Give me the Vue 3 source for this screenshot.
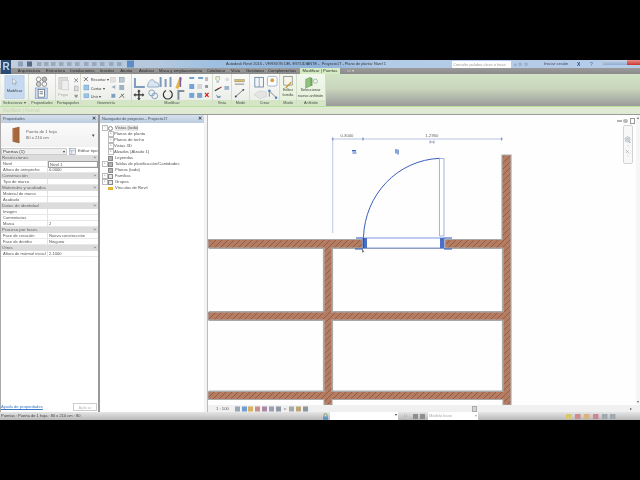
<script setup>
const tabs = [
  { name: 'Arquitectura', w: 28 }, { name: 'Estructura', w: 25 }, { name: 'Instalaciones', w: 29 },
  { name: 'Insertar', w: 20 }, { name: 'Anotar', w: 19 }, { name: 'Analizar', w: 21 },
  { name: 'Masa y emplazamiento', w: 47 }, { name: 'Colaborar', w: 24 }, { name: 'Vista', w: 15 },
  { name: 'Gestionar', w: 24 }, { name: 'Complementos', w: 30 }
]

const panels = [
  { id: 'sel', label: 'Seleccionar ▾', x: 1, w: 28 },
  { id: 'prop', label: 'Propiedades', x: 29, w: 27 },
  { id: 'clip', label: 'Portapapeles', x: 56, w: 25 },
  { id: 'geo', label: 'Geometría', x: 81, w: 51 },
  { id: 'mod', label: 'Modificar', x: 132, w: 81 },
  { id: 'vista', label: 'Vista', x: 213, w: 19 },
  { id: 'medir', label: 'Medir', x: 232, w: 18 },
  { id: 'crear', label: 'Crear', x: 250, w: 30 },
  { id: 'modo', label: 'Modo', x: 280, w: 17, green: true },
  { id: 'anf', label: 'Anfitrión', x: 297, w: 29, green: true }
]

const groups = [
  { title: 'Restricciones', rows: [['Nivel', 'Nivel 1'], ['Altura de antepecho', '0.0000']] },
  { title: 'Construcción', rows: [['Tipo de marco', '']] },
  { title: 'Materiales y acabados', rows: [['Material de marco', ''], ['Acabado', '']] },
  { title: 'Datos de identidad', rows: [['Imagen', ''], ['Comentarios', ''], ['Marca', '2']] },
  { title: 'Proceso por fases', rows: [['Fase de creación', 'Nueva construcción'], ['Fase de derribo', 'Ninguno']] },
  { title: 'Otros', rows: [['Altura de mármol inicial', '2.1000']] }
]

const tree = [
  { text: 'Vistas (todo)', box: true, icon: 'views', sel: true },
  { text: 'Planos de planta', sub: true },
  { text: 'Planos de techo', sub: true },
  { text: 'Vistas 3D', sub: true },
  { text: 'Alzados (Alzado 1)', sub: true },
  { text: 'Leyendas', icon: 'sheet' },
  { text: 'Tablas de planificación/Cantidades', box: true, icon: 'sheet' },
  { text: 'Planos (todo)', icon: 'sheet' },
  { text: 'Familias', box: true, icon: 'fam' },
  { text: 'Grupos', box: true, icon: 'fam' },
  { text: 'Vínculos de Revit', icon: 'link' }
]

const quick = [50, 57, 64, 72, 80, 88, 97, 105, 113, 122, 130]
const viewIcons = [
  ['#9aa6b5', 1], ['#6d9fd0', 8], ['#d8b060', 14], ['#c98d8d', 21], ['#a98aa6', 28],
  ['#9a9eb0', 35], ['#8e98a4', 42], ['#a8a8a8', 55], ['#bda676', 62], ['#8c949e', 69]
]
const statusIcons = [
  ['#d9c86a', 566], ['#cf8f88', 575], ['#dcb27c', 584], ['#cc8794', 593], ['#a0a8b0', 602], ['#a0a8b0', 610]
]
</script>

<template>
  <div class="screen">
    <div class="band"></div>
    <div class="app">
      <header class="titlebar">
        <div class="logo">R</div>
        <svg class="quick" viewBox="0 0 140 8">
          <rect x="16" y="1.5" width="5" height="5" fill="#8ea2b8" />
          <rect x="25" y="1.5" width="5" height="5" fill="#546a86" />
          <rect v-for="q in quick" :key="q" :x="q - 15" y="2" width="4.5" height="4" fill="#8a9ab0" opacity=".7" />
          <rect x="125" y=".5" width="7" height="7" fill="#5f8cc6" />
        </svg>
        <span class="title">Autodesk Revit 2016 - VERSIÓN DEL ESTUDIANTE -&nbsp;&nbsp;Proyecto17 - Plano de planta: Nivel 1</span>
        <span class="search">Consulte palabra clave o frase</span>
        <span class="title-tools">⌕ ☆ ☆</span>
        <span class="login">Iniciar sesión</span>
        <span class="dot-x">X</span>
        <span class="help">?</span>
        <div class="winbtns">
          <span class="wb"></span><span class="wb"></span><span class="wb close"></span>
        </div>
      </header>

      <nav class="tabs">
        <span v-for="t in tabs" :key="t.name" class="tab" :style="{ width: t.w + 'px' }">{{ t.name }}</span>
        <span class="tab active">Modificar | Puertas</span>
        <span class="tab-more">▭ ▾</span>
      </nav>

      <section class="ribbon">
        <div v-for="p in panels" :key="p.id" class="panel" :class="{ green: p.green }" :style="{ width: p.w + 'px' }">
          <svg class="panel-body" :viewBox="`${p.x} 74 ${p.w} 26`">
            <template v-if="p.id === 'sel'">
              <rect x="5" y="75" width="20" height="24" fill="#c5daf0" stroke="#a9c4e0" stroke-width=".5" />
              <path d="M13 78l0 6 1.5-1.3 1 2.3 1-.5-1-2.2 2 0z" fill="#eef4fa" stroke="#7b8a9a" stroke-width=".5" />
              <text x="15" y="92" class="rt" text-anchor="middle">Modificar</text>
            </template>
            <template v-if="p.id === 'prop'">
              <circle cx="39" cy="79" r="2.4" fill="none" stroke="#777" stroke-width=".8" />
              <circle cx="45" cy="79" r="2.4" fill="#bbb" stroke="#777" stroke-width=".8" />
              <circle cx="39" cy="84" r="2.4" fill="#ccc" stroke="#777" stroke-width=".8" />
              <circle cx="45" cy="84" r="2.4" fill="none" stroke="#777" stroke-width=".8" />
              <rect x="35.500" y="88" width="12.500" height="11" fill="#c5daf0" stroke="#7ba0cc" stroke-width=".7" />
              <rect x="38.500" y="89.500" width="6.500" height="8" fill="#fff" stroke="#445" stroke-width=".6" />
              <path d="M40 92h3.500M40 94h3.500" stroke="#345" stroke-width=".7" />
            </template>
            <template v-if="p.id === 'clip'">
              <rect x="59" y="77" width="9" height="12" fill="#dcdcdc" stroke="#bbb" stroke-width=".6" />
              <rect x="62" y="80" width="7" height="10" fill="#eee" stroke="#c4c4c4" stroke-width=".6" />
              <text x="63.500" y="96" class="rt faded" text-anchor="middle">Pegar</text>
              <path d="M75 78l4 4M79 78l-4 4" stroke="#667" stroke-width=".8" />
              <rect x="75" y="86" width="4" height="5" fill="#ddd" stroke="#999" stroke-width=".5" />
              <path d="M75 95l4 0-1 3-2 0z" fill="#9a9a80" />
            </template>
            <template v-if="p.id === 'geo'">
              <path d="M84 77l4 4M88 77l-4 4" stroke="#555" stroke-width=".8" />
              <text x="91" y="81" class="rt">Recortar ▾</text>
              <rect x="84" y="85" width="5" height="5" fill="#9cc4e8" stroke="#5b88b8" stroke-width=".4" />
              <text x="91" y="90" class="rt">Cortar ▾</text>
              <rect x="84" y="94" width="5" height="4" fill="#9cc4e8" stroke="#5b88b8" stroke-width=".4" />
              <text x="91" y="98" class="rt">Unir ▾</text>
              <rect x="111" y="77" width="5" height="5" fill="#e2e2e2" stroke="#c0c0c0" stroke-width=".4" />
              <rect x="120" y="77" width="5" height="5" fill="#b9c9d8" stroke="#788" stroke-width=".4" />
              <path d="M112 87l4-2v4zM120 85h5v5h-5z" fill="#9eb2c4" />
              <path d="M112 94h4v4h-4z" fill="#7f9fc0" />
              <path d="M120 98l5-4M122 94l3 4" stroke="#666" stroke-width=".9" />
            </template>
            <template v-if="p.id === 'mod'">
              <path d="M135 78v9h10" fill="none" stroke="#7f9cbc" stroke-width="2" />
              <path d="M148 85c1-6 6-7 7-3 3 0 5 2 4 5h-11z" fill="#dbe6f0" stroke="#7f9cbc" stroke-width=".8" />
              <path d="M161 77v10M166 79v8M171 77v10" stroke="#7f9cbc" stroke-width="2" />
              <path d="M176 88l4-11 3 1-4 11z" fill="#e3b74b" />
              <path d="M181 77v10" stroke="#7a5a9a" stroke-width="1.500" />
              <path d="M139 91v8M135 95h8" stroke="#333" stroke-width="1.400" />
              <path d="M139 89.500l-1.800 2h3.600zM139 100.500l-1.800-2h3.600zM133.500 95l2-1.800v3.600zM144.500 95l-2-1.800v3.600z" fill="#333" />
              <circle cx="152" cy="93" r="3" fill="none" stroke="#7f9cbc" stroke-width=".9" />
              <circle cx="155" cy="96" r="3" fill="none" stroke="#7f9cbc" stroke-width=".9" />
              <path d="M170 90.500a4.500 4.500 0 1 1-3.500 0" fill="none" stroke="#333" stroke-width="1.200" />
              <path d="M178 90h7v2h-5v8h-2z" fill="#7f8c99" />
              <path d="M190 78h5M199 78h5" stroke="#4d82c0" stroke-width="1.500" />
              <rect x="190" y="84" width="5" height="5" fill="#6fa4da" />
              <rect x="198" y="84" width="5" height="5" fill="#d6d6d6" />
              <rect x="206" y="85" width="3" height="3" fill="#8f9aa6" />
              <rect x="190" y="93" width="5" height="5" fill="#6fa4da" />
              <rect x="198" y="93" width="5" height="5" fill="#7fa2c6" />
              <path d="M206 93l3.500 4M209.500 93l-3.500 4" stroke="#d62020" stroke-width="1.300" />
              <rect x="206" y="77" width="3" height="4" fill="#bbb" />
            </template>
            <template v-if="p.id === 'vista'">
              <path d="M216 76h4v3l-1 1v2h-2v-2l-1-1z" fill="#f2f2c8" stroke="#6a8ab0" stroke-width=".5" />
              <circle cx="228" cy="79" r="2" fill="#ddd" />
              <path d="M215 91l5-3" stroke="#333" stroke-width="1.300" />
              <path d="M220 88l2-1" stroke="#c33" stroke-width="1.300" />
              <rect x="225" y="86" width="5" height="4" fill="#9cb4c8" />
              <path d="M216 95l3 2 2-1 0 2-3 1z" fill="#6d8eae" />
            </template>
            <template v-if="p.id === 'medir'">
              <rect x="235" y="79" width="10" height="2.600" fill="#d8bd6a" stroke="#776" stroke-width=".4" />
              <path d="M235 84h10" stroke="#555" stroke-width=".7" />
              <path d="M236 97l8-7" stroke="#555" stroke-width=".8" />
              <circle cx="236" cy="97" r="1" fill="#345" />
              <circle cx="244" cy="90" r="1" fill="#345" />
            </template>
            <template v-if="p.id === 'crear'">
              <rect x="255" y="77" width="9" height="10" fill="#f2f6fb" stroke="#5c7a9c" stroke-width=".8" />
              <path d="M259.500 77v10" stroke="#5c7a9c" stroke-width=".6" />
              <rect x="268" y="76" width="10" height="10" rx="2" fill="#fff" stroke="#8aa6c6" stroke-width=".8" />
              <circle cx="273" cy="80" r="2" fill="#d8a040" />
              <path d="M254 95l5-4 8 1 0 5-7 2z" fill="#e4e4e4" stroke="#c8c8c8" stroke-width=".5" />
              <path d="M270 91l7 7M270 91v6" stroke="#555" stroke-width=".7" />
              <circle cx="270" cy="91" r="1.300" fill="#4d84bb" />
              <circle cx="277" cy="98" r="1.300" fill="#4d84bb" />
            </template>
            <template v-if="p.id === 'modo'">
              <rect x="284" y="76" width="9" height="9" fill="#f5f5ea" stroke="#777" stroke-width=".7" />
              <path d="M286 88l6-6" stroke="#c79a3a" stroke-width="1.400" />
              <text x="288.500" y="91" class="rt" text-anchor="middle">Editar</text>
              <text x="288.500" y="97" class="rt" text-anchor="middle">familia</text>
            </template>
            <template v-if="p.id === 'anf'">
              <path d="M306 79l5-2v9l-5 2z" fill="#8fc57a" stroke="#5b8c55" stroke-width=".5" />
              <path d="M311 77l2 1v8l-2 0z" fill="#6ba35a" />
              <circle cx="316" cy="81" r="2.200" fill="none" stroke="#7a9a8a" stroke-width=".6" />
              <text x="311" y="91" class="rt" text-anchor="middle">Seleccionar</text>
              <text x="311" y="97" class="rt" text-anchor="middle">nuevo anfitrión</text>
            </template>
          </svg>
          <div class="panel-label">{{ p.label }}</div>
        </div>
        <div class="ribbon-rest"></div>
      </section>

      <div class="options"><span>Modificar | Puertas</span></div>

      <main class="workspace">
        <aside class="props">
          <div class="dock-head"><span>Propiedades</span><b>✕</b></div>
          <div class="type-preview">
            <svg class="door-thumb" viewBox="0 0 10 20">
              <path d="M1 2l8-2v20l-8-2z" fill="#a8683c" stroke="#6e4325" stroke-width=".5" />
              <path d="M1 2v16" stroke="#d9b089" stroke-width="1" />
            </svg>
            <div class="type-name"><span>Puerta de 1 hoja</span><span>80 x 210 cm</span></div>
            <span class="type-arrow">▾</span>
          </div>
          <div class="selector">
            <span class="combo">Puertas (1)<i>▾</i></span>
            <svg class="edit-icon" viewBox="0 0 8 8">
              <rect x=".5" y=".5" width="7" height="7" fill="#eef2f6" stroke="#8795a5" stroke-width=".7" />
              <path d="M1 3h6M3 3v4" stroke="#8795a5" stroke-width=".6" />
            </svg>
            <span class="edit-type">Editar tipo</span>
          </div>
          <div v-for="g in groups" :key="g.title">
            <div class="group-row"><span>{{ g.title }}</span><b>»</b></div>
            <div v-for="r in g.rows" :key="r[0]" class="prop-row">
              <span class="prop-key">{{ r[0] }}</span>
              <span class="prop-val" :class="{ boxed: r[0] === 'Nivel' }">{{ r[1] }}</span>
            </div>
          </div>
          <div class="props-foot">
            <a class="help-link">Ayuda de propiedades</a>
            <span class="apply">Aplicar</span>
          </div>
        </aside>

        <aside class="browser">
          <div class="dock-head"><span>Navegador de proyectos - Proyecto17</span><b>✕</b></div>
          <ul class="tree">
            <li v-for="n in tree" :key="n.text" class="node" :class="{ sub: n.sub }">
              <span class="exp"><i v-if="n.box || n.sub">{{ n.sub ? '+' : (n.text === 'Vistas (todo)' ? '−' : '+') }}</i></span>
              <span v-if="n.icon" class="ico" :class="n.icon"></span>
              <span class="label" :class="{ sel: n.sel }">{{ n.text }}</span>
            </li>
          </ul>
        </aside>

        <div class="gutter"></div>

        <section class="view">
          <svg class="drawing" viewBox="208 115 432 290">
            <defs>
              <pattern id="hatch" width="6" height="6" patternUnits="userSpaceOnUse">
                <rect width="6" height="6" fill="#b67c62" />
                <path d="M-1 7L7 -1" stroke="#6d4636" stroke-width=".55" />
              </pattern>
            </defs>
            <rect x="208" y="115" width="432" height="290" fill="#fefefe" />

            <!-- muros -->
            <g fill="url(#hatch)" stroke="#a9a9a9" stroke-width="1.200">
              <path d="M208 239.500H362.500V248H332V312H503V248H445V239.500H502V155H511V405H503V399.500H332V405H324V399.500H208V391.500H324V320H208V312H324V248H208Z" />
              <path d="M332 320H503V391.500H332Z" fill="#fefefe" />
            </g>
            <rect x="208" y="248.500" width="115.500" height="63" fill="#fefefe" />
            <rect x="332.500" y="248.500" width="170" height="63" fill="#fefefe" />
            <path d="M209 248.500H323.500V311.500H209M332.500 311.500V248.500H502.500V311.500H332.500M209 320.500H323.500V391H209M332.500 320.500H502.500V391H332.500Z" fill="none" stroke="#a9a9a9" stroke-width="1.200" />

            <!-- cotas -->
            <g stroke="#a9b6dd" stroke-width=".8" fill="none">
              <path d="M332.700 139H501.600M332.700 139V233M363 137V141M332.700 137V141M501.600 137V141" />
            </g>
            <circle cx="332.700" cy="139" r="1" fill="#8a9ccc" />
            <circle cx="363" cy="139" r="1" fill="#8a9ccc" />
            <circle cx="501.600" cy="139" r="1" fill="#8a9ccc" />
            <text x="347" y="136.500" class="dim" text-anchor="middle">0.3000</text>
            <text x="432" y="136.500" class="dim" text-anchor="middle">1.2950</text>
            <path d="M430 142h4M430 140.500v3M434 140.500v3" stroke="#5b6c99" stroke-width=".6" fill="none" />

            <!-- controles de giro -->
            <path d="M352 150h4v1.500h-4zM352.500 152.500h4v1h-4z" fill="#3b6bc4" />
            <path d="M396 149v4.500M398 149.500v5" stroke="#3b6bc4" stroke-width="1.200" />

            <!-- puerta -->
            <path d="M363.500 237C365 195 397 160 440 158.300" fill="none" stroke="#3a5fbb" stroke-width="1" />
            <path d="M439.500 158.500H444V236H439.500Z" fill="#fff" stroke="#8ba0dc" stroke-width=".8" />
            <rect x="363" y="238" width="81" height="10" fill="#fff" stroke="#6f8fdc" stroke-width=".9" />
            <path d="M363 238h4v10h-4zM440 238h4v10h-4z" fill="#4a6fc4" />
            <path d="M356 238H363.500V248M355 249H363M444 238H452M444 249H452" fill="none" stroke="#1f50bd" stroke-width="1.100" />
            <path d="M362 249l2.500 3-1.500-.3-.6 1.500z" fill="#555" />
          </svg>

          <!-- ViewCube y barra de navegación -->
          <div class="cube-tools">
            <i class="dash"></i><i class="disc"></i><i class="gear"></i>
          </div>
          <div class="navbar">
            <svg viewBox="0 0 10 39">
              <circle cx="4.500" cy="13" r="3.200" fill="#dde3e8" stroke="#a7a7a7" stroke-width=".7" />
              <circle cx="4.500" cy="13" r="1.500" fill="#c3c9ce" />
              <path d="M5 15l4 2-2 .5z" fill="#8aa9d6" />
              <circle cx="5" cy="21" r=".6" fill="#999" />
              <path d="M2 26l5 5M2.500 30l3-3" stroke="#999" stroke-width=".7" />
              <circle cx="5" cy="34" r=".6" fill="#999" />
            </svg>
          </div>

          <div class="scroll-y"><span>▴</span><span>▾</span></div>

          <div class="viewbar">
            <span class="scale">1 : 100</span>
            <svg class="viewbar-icons" viewBox="0 0 80 6">
              <rect v-for="v in viewIcons" :key="v[1]" :x="v[1]" y=".5" width="5" height="5" :fill="v[0]" />
              <circle cx="51" cy="3" r=".8" fill="#777" />
            </svg>
            <span class="thumb"></span>
            <span class="vb-arrow">▸</span>
          </div>
        </section>
      </main>

      <footer class="status">
        <span class="status-text">Puertas : Puerta de 1 hoja : 80 x 210 cm : 80</span>
        <svg class="workset-ico" viewBox="0 0 7 7">
          <path d="M1 3.500h5V7H1z" fill="#5c97c7" />
          <path d="M2 3.500V2a1.500 1.500 0 0 1 3 0v1.500" fill="none" stroke="#6a9a58" stroke-width=".8" />
        </svg>
        <span class="status-input"><i>▾</i></span>
        <span class="status-mini">⁞ ⁞</span>
        <span class="status-sq"></span><span class="status-sq"></span>
        <span class="status-model">Modelo base<i>▾</i></span>
        <span class="spacer"></span>
        <svg class="status-icons" viewBox="566 0 52 7">
          <rect v-for="s in statusIcons" :key="s[1]" :x="s[1]" y="1" width="5.500" height="5" :fill="s[0]" />
        </svg>
      </footer>
    </div>
    <div class="band"></div>
  </div>
</template>

<style scoped>
.screen {
  width: 640px;
  height: 480px;
  background: #000;
  overflow: hidden;
  font-family: "Liberation Sans", Arial, sans-serif;
  color: #444;
  font-size: 5px;
  line-height: 6px;
}
.band { height: 60px; background: #000; }
.app {
  height: 360px;
  display: flex;
  flex-direction: column;
  background: #fff;
  filter: blur(.4px);
}

/* barra de titulo */
.titlebar {
  position: relative;
  height: 8px;
  display: flex;
  align-items: center;
  background: linear-gradient(90deg, #c4cedb 0, #b5c8de 25%, #9fc0e2 33%, #8fb3dd 50%, #b2cbe7 60%, #b6cde8 100%);
}
.logo {
  position: absolute;
  left: 1px;
  top: 0;
  width: 10px;
  height: 14px;
  background: #2c4c78;
  color: #c4d2e4;
  font: bold 10px/14px "Liberation Sans", sans-serif;
  text-align: center;
  z-index: 2;
}
.quick { width: 140px; height: 8px; margin-left: 2px; flex: none; }
.title {
  position: absolute;
  left: 226px;
  color: #333;
  white-space: nowrap;
  font-size: 3.9px;
}
.search {
  position: absolute;
  left: 452px;
  width: 59px;
  height: 7px;
  background: #fff;
  color: #999;
  font-size: 3.9px;
  line-height: 7px;
  padding-left: 1px;
  box-sizing: border-box;
  white-space: nowrap;
}
.title-tools { position: absolute; left: 514px; color: #556; font-size: 5px; }
.login { position: absolute; left: 544px; color: #445; font-size: 4.2px; }
.dot-x { position: absolute; left: 577px; color: #244a8c; font-weight: bold; font-size: 5px; }
.help { position: absolute; left: 590px; color: #3d6ab0; font-size: 5px; }
.winbtns { position: absolute; right: 0; top: 0; display: flex; height: 5px; }
.wb { width: 12px; background: linear-gradient(#c9d8ea, #8eabd0); }
.wb.close { width: 13px; background: linear-gradient(#e9908a, #c8352c); }

/* pestañas */
.tabs {
  height: 6px;
  display: flex;
  align-items: center;
  padding-left: 15px;
  background: linear-gradient(#9b9b9b, #8a8a8a);
  color: #2d2d2d;
  font-size: 4.2px;
  white-space: nowrap;
}
.tab { text-align: center; flex: none; }
.tab.active {
  width: 40px;
  height: 6px;
  margin-left: 3px;
  background: #d5ecc2;
  color: #333;
}
.tab-more { margin-left: 7px; color: #ddd; }

/* cinta */
.ribbon {
  height: 32px;
  display: flex;
  background: #eef1ea;
}
.panel {
  flex: none;
  display: flex;
  flex-direction: column;
  border-right: 1px solid #d4dcce;
  box-sizing: border-box;
  background: linear-gradient(#fbfcfa, #e9ebe6);
}
.panel:first-child { margin-left: 1px; }
.panel.green { background: linear-gradient(#f3f8ee, #e2f0d6); }
.panel-body { width: 100%; height: 26px; display: block; }
.panel-label {
  height: 6px;
  text-align: center;
  font-size: 3.8px;
  line-height: 6px;
  color: #47504a;
  background: #d4e6c6;
  white-space: nowrap;
}
.rt { font-size: 4px; fill: #444; font-family: "Liberation Sans", sans-serif; }
.rt.faded { fill: #aaa; }
.ribbon-rest {
  flex: 1;
  background: linear-gradient(#d2e3c5 0, #c8d6bc 45%, #9b9b9b 100%);
}

.options {
  height: 9px;
  box-sizing: border-box;
  border-top: 1px solid #b9df9e;
  border-bottom: 1px solid #9a9a9a;
  background: #e0ead2;
  padding-left: 3px;
  color: #c4d5b4;
  font-size: 4.5px;
  line-height: 7px;
}

/* zona de trabajo */
.workspace {
  flex: 1;
  display: flex;
  min-height: 0;
}
.props, .browser {
  flex: none;
  display: flex;
  flex-direction: column;
  background: #fff;
  box-sizing: border-box;
}
.props {
  width: 98px;
  border-left: 1px solid #aaa;
  position: relative;
}
.browser {
  width: 106px;
  border-left: 2px solid #999;
}
.gutter { width: 4px; flex: none; background: #f3f3f3; border-right: 1px solid #bbb; box-sizing: border-box; }
.dock-head {
  height: 8px;
  flex: none;
  display: flex;
  justify-content: space-between;
  align-items: center;
  padding: 0 2px;
  background: linear-gradient(#d6e1ec, #bccde0);
  color: #46505c;
  font-size: 3.9px;
}
.dock-head b { font-size: 4.5px; color: #333; }
.type-preview {
  height: 24px;
  flex: none;
  display: flex;
  align-items: center;
  background: linear-gradient(#fafafa, #f1f1f1);
  padding-left: 11px;
}
.door-thumb { width: 8px; height: 18px; flex: none; }
.type-name { display: flex; flex-direction: column; margin-left: 6px; font-size: 4.2px; flex: 1; color: #666; }
.type-arrow { margin-right: 3px; color: #444; }
.selector {
  height: 8px;
  flex: none;
  display: flex;
  align-items: center;
}
.combo {
  width: 66px;
  height: 7px;
  display: flex;
  justify-content: space-between;
  background: #eee;
  border: .5px solid #ccc;
  box-sizing: border-box;
  padding: 0 1px;
  font-size: 4.4px;
  line-height: 6px;
  color: #333;
}
.combo i { font-style: normal; }
.edit-icon { width: 7px; height: 7px; margin-left: 2px; flex: none; }
.edit-type { margin-left: 2px; font-size: 4.4px; white-space: nowrap; color: #555; }
.group-row {
  height: 6px;
  display: flex;
  justify-content: space-between;
  padding: 0 2px 0 1px;
  background: #dcdcdc;
  font-size: 4.4px;
  color: #666;
  white-space: nowrap;
}
.group-row b { font-weight: normal; }
.prop-row {
  height: 6px;
  display: grid;
  grid-template-columns: 47px 1fr;
  font-size: 4.1px;
  color: #555;
  box-sizing: border-box;
  border-bottom: .5px solid #e8e8e8;
  white-space: nowrap;
}
.prop-key { padding-left: 2px; border-right: .5px solid #e2e2e2; }
.prop-val { padding-left: 1px; }
.prop-val.boxed { border: .5px solid #999; line-height: 5px; box-sizing: border-box; }
.props-foot {
  position: absolute;
  left: 0;
  right: 1px;
  bottom: 1px;
  display: flex;
  justify-content: space-between;
  align-items: center;
}
.help-link { color: #3b78c8; font-size: 4.2px; text-decoration: underline; }
.apply {
  width: 24px;
  height: 8px;
  border: .5px solid #ccc;
  box-sizing: border-box;
  text-align: center;
  color: #bbb;
  font-size: 4.2px;
  line-height: 7px;
}
.tree { list-style: none; margin: 2px 0 0; padding: 0 0 0 2px; }
.node { height: 6px; display: flex; align-items: center; font-size: 4.2px; white-space: nowrap; color: #555; }
.node.sub { padding-left: 6px; }
.exp { width: 5px; flex: none; }
.exp i {
  display: block;
  width: 3.500px;
  height: 3.500px;
  border: .5px solid #bbb;
  font-style: normal;
  font-size: 3.500px;
  line-height: 3.500px;
  text-align: center;
  color: #888;
}
.ico { width: 5px; height: 5px; margin-left: 1px; flex: none; box-sizing: border-box; }
.ico.views { border: .8px solid #888; border-radius: 50%; }
.ico.sheet { background: #b3b3b3; border: .5px solid #888; }
.ico.fam { background: #e6e6e6; border: .5px solid #888; }
.ico.link { background: #e3b638; height: 3px; }
.node .label { margin-left: 2px; }
.node.sub .label { margin-left: 1px; }
.label.sel { background: #e8e8e8; }

/* vista */
.view {
  flex: 1;
  position: relative;
  min-width: 0;
  background: #fefefe;
}
.drawing { position: absolute; left: 0; top: 0; width: 432px; height: 290px; display: block; }
.dim { font-size: 4.2px; fill: #666; font-family: "Liberation Sans", sans-serif; }
.cube-tools {
  position: absolute;
  left: 409px;
  top: 3px;
  display: flex;
  align-items: center;
  gap: 1px;
}
.dash { width: 5px; height: 1.500px; background: #b5b5b5; }
.disc { width: 4.500px; height: 4.500px; background: #bbb; border-radius: 50%; }
.gear { width: 3.500px; height: 3.500px; border: .8px solid #999; margin-left: 1px; }
.navbar {
  position: absolute;
  left: 415px;
  top: 10px;
  width: 10px;
  height: 39px;
  border: .5px solid #d4d4d4;
  border-radius: 2px;
  box-sizing: border-box;
  background: #f8f8f8;
}
.navbar svg { width: 100%; height: 100%; display: block; }
.scroll-y {
  position: absolute;
  right: 0;
  top: 0;
  bottom: 7px;
  width: 4px;
  display: flex;
  flex-direction: column;
  justify-content: space-between;
  background: #f6f6f6;
  color: #666;
  font-size: 4px;
  text-align: center;
}
.viewbar {
  position: absolute;
  left: 0;
  right: 0;
  bottom: 0;
  height: 7px;
  display: flex;
  align-items: center;
  background: #f0f0f0;
  padding-left: 8px;
}
.scale { font-size: 4.2px; color: #555; width: 18px; flex: none; }
.viewbar-icons { width: 80px; height: 6px; flex: none; }
.thumb {
  width: 5px;
  height: 6px;
  margin-left: 158px;
  background: #d4d4d4;
  border: .5px solid #aaa;
  box-sizing: border-box;
  flex: none;
}
.vb-arrow { margin-left: auto; margin-right: 8px; color: #555; font-size: 4px; }

/* barra de estado */
.status {
  height: 8px;
  display: flex;
  align-items: center;
  background: linear-gradient(#e6e6e6, #b8b8b8);
  padding-left: 1px;
  font-size: 4px;
  white-space: nowrap;
  flex: none;
}
.status-text { width: 321px; flex: none; color: #444; }
.workset-ico { width: 7px; height: 7px; flex: none; }
.status-input {
  width: 68px;
  height: 8px;
  margin-left: 1px;
  background: #fff;
  flex: none;
  text-align: right;
  padding-right: 1px;
  box-sizing: border-box;
}
.status-input i, .status-model i { font-style: normal; }
.status-mini { width: 15px; text-align: center; flex: none; color: #777; }
.status-sq { width: 5px; height: 5px; margin-right: 2px; background: #8e8e8e; flex: none; }
.status-model {
  width: 50px;
  height: 8px;
  display: flex;
  justify-content: space-between;
  background: #fff;
  color: #aaa;
  padding: 0 1px;
  box-sizing: border-box;
  flex: none;
  line-height: 8px;
  margin-left: 1px;
}
.spacer { flex: 1; }
.status-icons { width: 52px; height: 7px; margin-right: 22px; flex: none; }
</style>
